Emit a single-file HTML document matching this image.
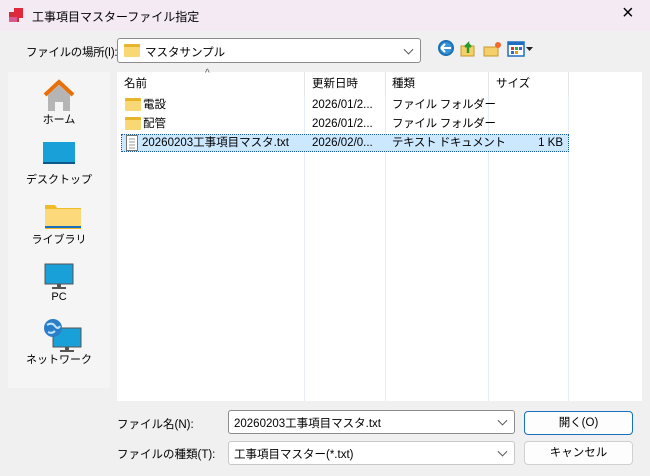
<!DOCTYPE html>
<html><head><meta charset="utf-8"><style>
*{box-sizing:border-box;margin:0;padding:0}
body{width:650px;height:476px;overflow:hidden;background:#f0f0f0;font-family:"Liberation Sans","Noto Sans CJK JP",sans-serif;font-size:11.5px;color:#000;position:relative}
.a{position:absolute}
.title{left:0;top:0;width:650px;height:31px;background:#f3eaf3}
.combo{background:#fff;border:1px solid #8c8c8c;border-radius:3px}
.chev{position:absolute;right:8px;top:50%;width:7px;height:7px;border-right:1px solid #555;border-bottom:1px solid #555;transform:translateY(-70%) rotate(45deg)}
.fold{display:inline-block;width:16px;height:13px;background:#f8d775;border-top:3px solid #e8b42c;border-radius:1px;vertical-align:middle}
.places{left:8px;top:72px;width:102px;height:316px;background:#f5f5f5}
.pl{position:absolute;left:0;width:102px;text-align:center;font-size:11px}
.list{left:117px;top:72px;width:525px;height:329px;background:#fff}
.vl{position:absolute;top:24px;bottom:0;width:1px;background:#e3eef8}
.hl{position:absolute;top:0;height:24px;width:1px;background:#e5e5e5}
.row{position:absolute;left:4px;height:18px;line-height:18px;width:448px}
.btn{background:#fdfdfd;border:1px solid #d0d0d0;border-radius:4px;text-align:center;line-height:22px}
</style></head><body>
<div class="a title"></div>
<svg class="a" style="left:8px;top:7px" width="16" height="16"><rect x="1" y="5" width="10" height="10" fill="#c8303a"/><rect x="6" y="1" width="9" height="10" fill="#e0283a"/><rect x="1" y="10" width="8" height="5" fill="#d85a90"/></svg>
<div class="a" style="left:32px;top:8px;font-size:12px">工事項目マスターファイル指定</div>
<div class="a" style="left:622px;top:2px;font-size:20px;font-weight:300">×</div>

<div class="a" style="left:26px;top:44px;letter-spacing:-0.3px">ファイルの場所(I):</div>
<div class="a combo" style="left:117px;top:38px;width:304px;height:25px"><span class="fold" style="position:absolute;left:6px;top:5px"></span><span style="position:absolute;left:27px;top:5px">マスタサンプル</span><i class="chev"></i></div>
<svg class="a" style="left:437px;top:39px" width="100" height="20">
<circle cx="9" cy="9" r="8" fill="#1a6fb5"/><circle cx="9" cy="9" r="6" fill="#3a95d8"/><path d="M4 9h10M4 9l4-4M4 9l4 4" stroke="#fff" stroke-width="2" fill="none"/>
<rect x="24" y="7" width="13" height="10" fill="#f4cf6a" stroke="#c99a2a"/><path d="M31 14V5l-3 3M31 5l3 3" stroke="#2a9a2a" stroke-width="2.5" fill="none"/>
<rect x="47" y="8" width="14" height="9" fill="#f4cf6a" stroke="#c99a2a"/><circle cx="61" cy="6" r="3" fill="#f06a2a"/>
<rect x="71" y="3" width="16" height="14" fill="#fff" stroke="#1e6fc0" stroke-width="1.5"/><rect x="71" y="3" width="16" height="3" fill="#1e6fc0"/><rect x="74" y="8" width="3" height="3" fill="#d33"/><rect x="78" y="8" width="3" height="3" fill="#3a3"/><rect x="82" y="8" width="3" height="3" fill="#36c"/><rect x="74" y="12" width="3" height="3" fill="#36c"/><rect x="78" y="12" width="3" height="3" fill="#e90"/><path d="M89 8h7l-3.5 4z" fill="#222"/>
</svg>

<div class="a places">
<svg class="pl" style="top:6px" height="36" viewBox="0 0 102 36"><path d="M37 17L51 4L65 17" stroke="#e8700a" stroke-width="4" fill="none"/><path d="M40 17L51 7L62 17V33H55V24H47V33H40Z" fill="#b5b5b5"/></svg>
<div class="pl" style="top:39px">ホーム</div>
<svg class="pl" style="top:68px" height="26" viewBox="0 0 102 26"><rect x="35" y="2" width="32" height="22" fill="#1aa0d8"/><rect x="35" y="22" width="32" height="2" fill="#0c5a8a"/></svg>
<div class="pl" style="top:99px">デスクトップ</div>
<svg class="pl" style="top:130px" height="28" viewBox="0 0 102 28"><path d="M37 3h10l2 3h24v21H37z" fill="#f2b928"/><rect x="37" y="7" width="36" height="18" fill="#fcd97a"/><rect x="37" y="24" width="36" height="2" fill="#1a6fc0"/></svg>
<div class="pl" style="top:159px">ライブラリ</div>
<svg class="pl" style="top:190px" height="28" viewBox="0 0 102 28"><rect x="37" y="2" width="28" height="20" fill="#1aa0d8" stroke="#555"/><rect x="49" y="22" width="4" height="3" fill="#555"/><rect x="44" y="25" width="14" height="2" fill="#555"/></svg>
<div class="pl" style="top:219px">PC</div>
<svg class="pl" style="top:245px" height="36" viewBox="0 0 102 36"><rect x="45" y="11" width="28" height="19" fill="#1aa0d8" stroke="#555"/><rect x="57" y="30" width="4" height="3" fill="#555"/><rect x="52" y="33" width="14" height="2" fill="#555"/><circle cx="45" cy="11" r="9" fill="#2a7ec8"/><path d="M39 8q5-3 8 1t5 0M40 15q4 2 7-1" stroke="#bfe3f8" stroke-width="2" fill="none"/></svg>
<div class="pl" style="top:279px">ネットワーク</div>
</div>

<div class="a list">
<div class="hl" style="left:187px"></div><div class="hl" style="left:268px"></div><div class="hl" style="left:371px"></div><div class="hl" style="left:451px"></div>
<div class="vl" style="left:187px"></div><div class="vl" style="left:268px"></div><div class="vl" style="left:371px"></div><div class="vl" style="left:451px"></div>
<div class="a" style="left:88px;top:-4px;font-size:10px;color:#555">^</div>
<div class="a" style="left:7px;top:3px">名前</div>
<div class="a" style="left:195px;top:3px">更新日時</div>
<div class="a" style="left:275px;top:3px">種類</div>
<div class="a" style="left:379px;top:3px">サイズ</div>
<div class="row" style="top:24px"><span class="fold" style="margin:0 2px 0 4px"></span>電設<span class="a" style="left:191px">2026/01/2...</span><span class="a" style="left:271px;letter-spacing:-0.3px">ファイル フォルダー</span></div>
<div class="row" style="top:43px"><span class="fold" style="margin:0 2px 0 4px"></span>配管<span class="a" style="left:191px">2026/01/2...</span><span class="a" style="left:271px;letter-spacing:-0.3px">ファイル フォルダー</span></div>
<div class="row" style="top:62px;background:#cce8ff;border:1px dotted #1a5a9a;line-height:16px"><svg width="14" height="16" style="vertical-align:middle;margin:0 3px 0 3px"><rect x="1.5" y="0.5" width="11" height="15" fill="#fff" stroke="#777"/><path d="M4 4h6M4 7h6M4 10h6M4 13h6" stroke="#999"/></svg>20260203工事項目マスタ.txt<span class="a" style="left:190px">2026/02/0...</span><span class="a" style="left:270px;letter-spacing:-0.4px">テキスト ドキュメント</span><span class="a" style="right:5px">1 KB</span></div>
</div>

<div class="a" style="left:117px;top:416px">ファイル名(N):</div>
<div class="a combo" style="left:228px;top:410px;width:287px;height:24px"><span style="position:absolute;left:5px;top:4px">20260203工事項目マスタ.txt</span><i class="chev"></i></div>
<div class="a btn" style="left:524px;top:411px;width:109px;height:24px;border-color:#1a6fc0">開く(O)</div>
<div class="a" style="left:117px;top:446px">ファイルの種類(T):</div>
<div class="a combo" style="left:228px;top:441px;width:287px;height:24px;border-color:#c8c8c8"><span style="position:absolute;left:5px;top:4px">工事項目マスター(*.txt)</span><i class="chev"></i></div>
<div class="a btn" style="left:524px;top:441px;width:109px;height:24px">キャンセル</div>
</body></html>
